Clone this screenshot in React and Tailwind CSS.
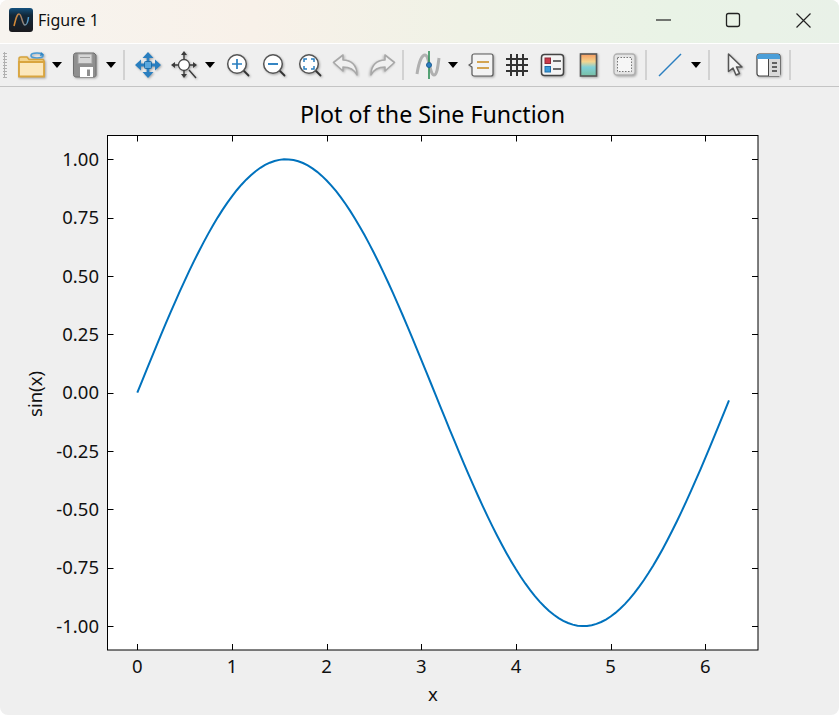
import React from "react";

const FONT = '"Noto Sans", "Open Sans", sans-serif';

const xPos = v => 137.3 + v * 94.67;
const yPos = v => 392.7 - v * 233.4;

const sinePoints = () => {
    const pts = [];
    for (let x = 0; x <= 6.25; x += 0.05) {
        pts.push(`${xPos(x).toFixed(2)},${yPos(Math.sin(x)).toFixed(2)}`);
    }
    pts.push(`${xPos(6.25).toFixed(2)},${yPos(Math.sin(6.25)).toFixed(2)}`);
    return pts.join(" ");
};

const Icon = ({ children, w = 28, h = 28 }) => (
    <svg width={w} height={h} viewBox={`0 0 ${w} ${h}`} fill="none" className="drop-shadow-[1px_1px_1px_rgba(0,0,0,0.3)]">
        {children}
    </svg>
);

const Slot = ({ className, children }) => (
    <div className={`flex h-full shrink-0 items-center justify-center ${className}`}>{children}</div>
);

const Arrow = ({ className }) => (
    <Slot className={className}>
        <div className="h-0 w-0 border-x-[5.5px] border-t-[6px] border-x-transparent border-t-black" />
    </Slot>
);

const Sep = ({ className }) => (
    <Slot className={className}>
        <div className="h-[30px] w-[2px] bg-[#d2d2d2]" />
    </Slot>
);

const Lens = ({ children }) => (
    <Icon>
        <path d="M18 18l6.500 6.500" stroke="#333" strokeWidth="1.800" strokeLinecap="round" />
        <circle cx="13" cy="13" r="9.300" fill="#fff" stroke="#555" strokeWidth="1.500" />
        {children}
    </Icon>
);

const FolderIcon = () => (
    <Icon w={30}>
        <ellipse cx="20" cy="4.500" rx="6" ry="2.500" stroke="#4a9bd4" strokeWidth="1.600" />
        <path d="M24 1l3 3-4 1z" fill="#2f86c6" />
        <path d="M2 25V7.500C2 6.500 3 6 4 6h6l2 2.500h13c1 0 2 .7 2 1.600V25z" fill="#f3d48e" stroke="#d6a33c" strokeWidth="1.400" />
        <path d="M2 25.500V11h25v14.500z" fill="#fce8bd" stroke="#d9a53f" strokeWidth="1.800" />
    </Icon>
);

const SaveIcon = () => (
    <Icon w={26}>
        <path d="M1.500 4.500c0-1.500 1-2.500 2.500-2.500h18l2 2v20c0 1-1 2-2 2H4c-1.500 0-2.500-1-2.500-2.500z" fill="#8f8f8f" stroke="#6e6e6e" />
        <rect x="6" y="3" width="14" height="9.500" fill="#d6d6d6" stroke="#a0a0a0" />
        <path d="M8 6.500h10" stroke="#9a9a9a" />
        <rect x="8" y="16" width="13" height="10" fill="#fff" />
        <rect x="15" y="18.500" width="3" height="6.500" fill="#8f8f8f" />
    </Icon>
);

const MoveIcon = () => (
    <Icon>
        <g stroke="#2a7fc0" strokeWidth="2.800" strokeLinecap="round">
            <path d="M14 4v20M4 14h20" />
        </g>
        <path d="M14 1l5.500 6h-11zM14 27l5.500-6h-11zM1 14l6-5.500v11zM27 14l-6-5.500v11z" fill="#2a7fc0" />
        <rect x="10.500" y="10.500" width="7" height="7" rx="1" fill="#5aa7dd" stroke="#1f6ea8" />
    </Icon>
);

const PanIcon = () => (
    <Icon>
        <g stroke="#3a3a3a" strokeWidth="1.400">
            <path d="M14 3v6M14 19v6M3 14h5M20 14h5M19 19l7 8" />
        </g>
        <path d="M14 0l3 4h-6zM14 27l3-4h-6zM1 14l4-3v6zM27 14l-4-3v6z" fill="#3a3a3a" />
        <circle cx="14" cy="14" r="5.500" fill="#fff" stroke="#444" strokeWidth="1.300" />
    </Icon>
);

const UndoIcon = ({ flip }) => (
    <svg width="28" height="24" viewBox="0 0 28 24" fill="none" className={`drop-shadow-[1px_1px_1px_rgba(0,0,0,0.25)] ${flip ? "-scale-x-100" : ""}`}>
        <path d="M1.500 9.500L11 2v5c8 0 14 5 14 15-3-6-7-8-14-8v4z" fill="#f0f0f0" stroke="#a8a8a8" strokeWidth="1.600" strokeLinejoin="round" />
    </svg>
);

const CurveIcon = () => (
    <svg width="26" height="30" viewBox="0 0 26 30" fill="none">
        <path d="M2 24C4 11 7 5 10 5c4 0 5 20 9 20 3 0 4-9 5-17" stroke="#b0b0b0" strokeWidth="3" />
        <path d="M14 1v28" stroke="#2f8f57" strokeWidth="1.600" />
        <circle cx="14" cy="15" r="2.500" fill="#2a7fc0" stroke="#1f5f96" />
    </svg>
);

const LegendIcon = () => (
    <Icon w={26} h={26}>
        <path d="M6 2h17c1 0 2 1 2 2v18c0 1-1 2-2 2H6c-1 0-2-1-2-2v-7l-3-2 3-2V4c0-1 1-2 2-2z" fill="#f3f3f3" stroke="#5b5b5b" strokeWidth="1.200" />
        <path d="M9 10h12M9 16h12" stroke="#c98a1d" strokeWidth="1.500" />
    </Icon>
);

const GridIcon = () => (
    <svg width="24" height="24" viewBox="0 0 24 24" fill="none">
        <path d="M6 1v22M12 1v22M18 1v22M1 6h22M1 12h22M1 18h22" stroke="#333" strokeWidth="2" />
    </svg>
);

const LegendBoxIcon = () => (
    <Icon w={26} h={26}>
        <rect x="1.500" y="2.500" width="22" height="21" rx="3" fill="#f4f4f4" stroke="#444" strokeWidth="1.500" />
        <rect x="5" y="6" width="5.500" height="5.500" fill="#cb3a4a" stroke="#8e2b38" />
        <rect x="5" y="14.500" width="5.500" height="5.500" fill="#3a9ad9" stroke="#1f6ea8" />
        <path d="M13 9h8M13 17h8" stroke="#3e3e3e" strokeWidth="1.400" />
    </Icon>
);

const ColorbarIcon = () => (
    <Icon w={20} h={26}>
        <defs>
            <linearGradient id="cbar" x1="0" y1="0" x2="0" y2="1">
                <stop offset="0" stopColor="#f59a5f" />
                <stop offset="0.35" stopColor="#f4d58f" />
                <stop offset="0.6" stopColor="#7fd0d8" />
                <stop offset="1" stopColor="#78bfa4" />
            </linearGradient>
        </defs>
        <rect x="1.500" y="2" width="16" height="22" fill="url(#cbar)" stroke="#555" strokeWidth="1.600" />
    </Icon>
);

const BoxIcon = () => (
    <Icon w={24} h={24}>
        <rect x="1" y="1" width="21" height="21" rx="3" fill="#e4e4e4" stroke="#b0b0b0" strokeWidth="1.300" />
        <rect x="4.500" y="4.500" width="14" height="14" fill="#f6f6f6" stroke="#777" strokeDasharray="1.500 1.500" />
    </Icon>
);

const LineIcon = () => (
    <svg width="24" height="24" viewBox="0 0 24 24" fill="none">
        <path d="M1 23L23 1" stroke="#2a7fc0" strokeWidth="1.500" />
    </svg>
);

const CursorIcon = () => (
    <Icon w={16} h={24}>
        <path d="M1.500 1v17.500l4.500-3.500 3 7 3.500-1.500-3-6.500h5.500z" fill="#f4f4f4" stroke="#555" strokeWidth="1.500" strokeLinejoin="round" />
    </Icon>
);

const PanelIcon = () => (
    <Icon w={26} h={26}>
        <rect x="1" y="2" width="23" height="22" rx="2.500" fill="#fff" stroke="#454545" strokeWidth="1.200" />
        <path d="M1 7V4.500C1 3 2 2 3.500 2h18C23 2 24 3 24 4.500V7z" fill="#4b9fd9" />
        <rect x="12.500" y="7" width="11.500" height="17" fill="#d9d9d9" />
        <path d="M12.500 7v17" stroke="#454545" />
        <path d="M16 11h5M16 15h5M16 19h5" stroke="#3a3a3a" strokeWidth="1.400" />
    </Icon>
);

const Grip = () => (
    <Slot className="w-[16px] pl-[1px] justify-start">
        <div className="ml-[2px] h-[26px] w-[4px] bg-[radial-gradient(circle,#b0b0b0_1px,transparent_1.2px)] bg-[length:3px_3px]" />
    </Slot>
);

const Toolbar = () => (
    <div className="flex h-[43px] border-b-[1.5px] border-[#c4c4c4] bg-[#efefef]">
        <Grip />
        <Slot className="w-[32px]"><FolderIcon /></Slot>
        <Arrow className="w-[18px]" />
        <Slot className="ml-[1px] w-[35px]"><SaveIcon /></Slot>
        <Arrow className="w-[18px]" />
        <Sep className="w-[8px]" />
        <Slot className="ml-[2px] w-[36px]"><MoveIcon /></Slot>
        <Slot className="w-[36px]"><PanIcon /></Slot>
        <Arrow className="w-[16px]" />
        <Slot className="ml-[2px] w-[36px]">
            <Lens><path d="M8 13h10M13 8v10" stroke="#2a7fc0" strokeWidth="1.700" /></Lens>
        </Slot>
        <Slot className="w-[36px]">
            <Lens><path d="M8 13h10" stroke="#2a7fc0" strokeWidth="1.900" /></Lens>
        </Slot>
        <Slot className="w-[36px]">
            <Lens><path d="M8 11V8h3M15 8h3v3M18 15v3h-3M11 18H8v-3" stroke="#2a7fc0" strokeWidth="1.500" /></Lens>
        </Slot>
        <Slot className="w-[36px]"><UndoIcon /></Slot>
        <Slot className="w-[36px]"><UndoIcon flip /></Slot>
        <Sep className="w-[6px]" />
        <Slot className="ml-[4px] w-[36px]"><CurveIcon /></Slot>
        <Arrow className="w-[14px]" />
        <Slot className="ml-[3px] w-[36px]"><LegendIcon /></Slot>
        <Slot className="w-[36px]"><GridIcon /></Slot>
        <Slot className="w-[36px]"><LegendBoxIcon /></Slot>
        <Slot className="w-[35px]"><ColorbarIcon /></Slot>
        <Slot className="ml-[1px] w-[36px]"><BoxIcon /></Slot>
        <Sep className="w-[6px]" />
        <Slot className="ml-[3px] w-[36px]"><LineIcon /></Slot>
        <Arrow className="w-[16px]" />
        <Sep className="ml-[2px] w-[6px]" />
        <Slot className="ml-[6px] w-[34px]"><CursorIcon /></Slot>
        <Slot className="w-[34px]"><PanelIcon /></Slot>
        <Sep className="ml-[1px] w-[6px]" />
    </div>
);

const TitleBar = () => (
    <div className="flex h-[44px] items-center border-b border-white bg-[linear-gradient(90deg,#f7f4ef_0%,#f8f1e9_30%,#f0f2e6_55%,#e9f3e6_80%,#e9f1e8_100%)] pb-[3px]">
        <svg width="24" height="24" viewBox="0 0 24 24" className="ml-[9px]">
            <defs>
                <linearGradient id="appbg" x1="0" y1="0" x2="0" y2="1">
                    <stop offset="0" stopColor="#14527f" />
                    <stop offset="0.3" stopColor="#12283a" />
                    <stop offset="1" stopColor="#1a1a1e" />
                </linearGradient>
                <linearGradient id="appline" x1="0" y1="0" x2="1" y2="0">
                    <stop offset="0" stopColor="#d98a32" />
                    <stop offset="0.5" stopColor="#a87f60" />
                    <stop offset="1" stopColor="#4b9ad0" />
                </linearGradient>
            </defs>
            <rect width="24" height="24" rx="3" fill="url(#appbg)" />
            <path d="M5 18C7 10 8 6 10 6c3 0 3 11 6 11 2 0 3-4 3.500-8" stroke="url(#appline)" strokeWidth="1.500" fill="none" />
        </svg>
        <span className="ml-[5px] text-[16px] leading-none text-[#111]">Figure 1</span>
        <svg width="160" height="20" viewBox="0 0 160 20" fill="none" className="ml-auto mr-[24px]">
            <path d="M1 10h15" stroke="#222" strokeWidth="1.200" />
            <rect x="71.500" y="3.500" width="13" height="13" rx="2" stroke="#222" strokeWidth="1.300" />
            <path d="M141.500 3.500l14 14M155.500 3.500l-14 14" stroke="#222" strokeWidth="1.200" />
        </svg>
    </div>
);

const Plot = () => (
    <svg width="839" height="628" viewBox="0 87 839 628" className="block">
        <rect x="107.500" y="135.500" width="650.500" height="514.500" fill="#fff" stroke="#000" strokeWidth="1" />
        <g stroke="#000" strokeWidth="1">
            {[0, 1, 2, 3, 4, 5, 6].map(t => (
                <path key={t} d={`M${Math.round(xPos(t)) + 0.5} 135.500v6M${Math.round(xPos(t)) + 0.5} 650v-6`} />
            ))}
            {[1, 0.75, 0.5, 0.25, 0, -0.25, -0.5, -0.75, -1].map(t => (
                <path key={t} d={`M107.500 ${Math.round(yPos(t)) + 0.5}h6M758 ${Math.round(yPos(t)) + 0.5}h-6`} />
            ))}
        </g>
        <polyline points={sinePoints()} fill="none" stroke="#0072bd" strokeWidth="2" />
        <g fill="#111" fontSize="18.500" fontFamily={FONT}>
            {[1, 0.75, 0.5, 0.25, 0, -0.25, -0.5, -0.75, -1].map(t => (
                <text key={t} x="99" y={yPos(t) + 6.500} textAnchor="end">{t.toFixed(2)}</text>
            ))}
            {[0, 1, 2, 3, 4, 5, 6].map(t => (
                <text key={t} x={xPos(t)} y="673" textAnchor="middle">{t}</text>
            ))}
            <text x="433" y="701" textAnchor="middle">x</text>
            <text transform="translate(42 394) rotate(-90)" textAnchor="middle">sin(x)</text>
            <text x="432.500" y="123" textAnchor="middle" fontSize="23.200" fill="#000">Plot of the Sine Function</text>
        </g>
    </svg>
);

const App = () => {
    return (
        <div className="h-[715px] w-[839px] overflow-hidden rounded-[8px] bg-[#efefef]" style={{ fontFamily: FONT }}>
            <TitleBar />
            <Toolbar />
            <Plot />
        </div>
    );
};

export default App;
